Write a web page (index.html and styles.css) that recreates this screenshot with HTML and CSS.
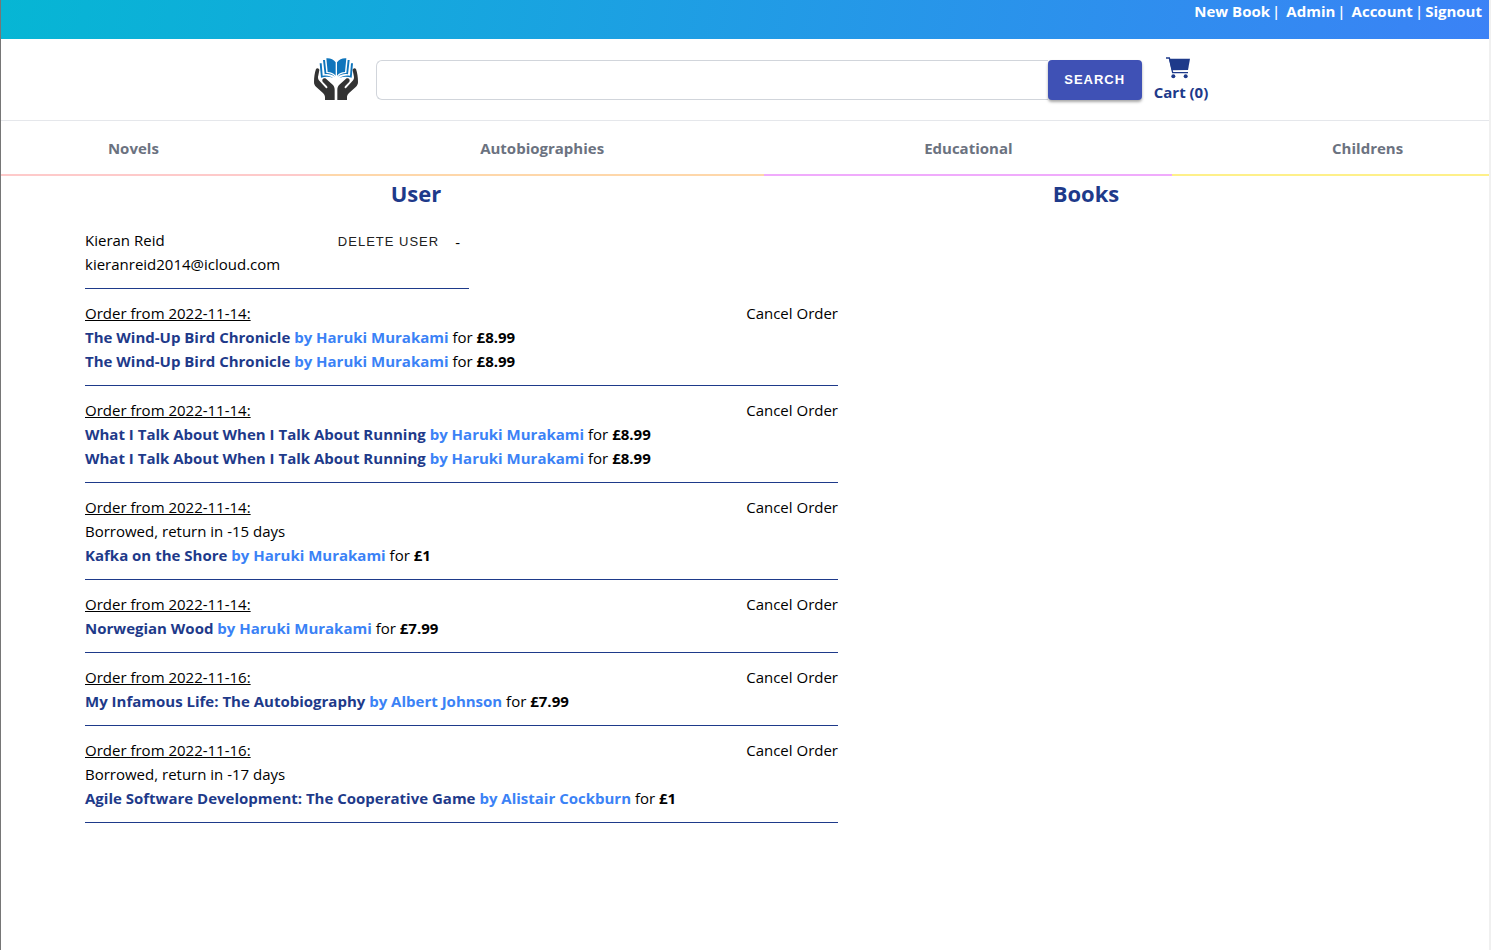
FILE: index.html
```html
<!DOCTYPE html>
<html lang="en">
<head>
<meta charset="utf-8">
<meta name="viewport" content="width=device-width, initial-scale=1">
<title>Admin</title>
<link rel="stylesheet" href="styles.css">
</head>
<body>
<div class="topbar">
  <a href="#">New Book</a><span class="bar bar-wide">|</span><a href="#">Admin</a><span class="bar bar-wide">|</span><a href="#">Account</a><span class="bar">|</span><a href="#">Signout</a>
</div>
<header class="header">
  <a class="logo" href="#" aria-label="Home">
    <svg width="44" height="43" viewBox="0 0 132 129">
      <g fill="#0f75bc">
        <path d="M65 13C58 4 49 0 37 1l4 41c10 0 18 4 24 11zM69 13C76 4 85 0 97 1l-4 41c-10 0-18 4-24 11z"/>
        <path d="M33 6h-6l5 43c11-2 21 0 31 8-6-9-15-12-26-12zM101 6h6l-5 43c-11-2-21 0-31 8 6-9 15-12 26-12z"/>
        <path d="M23 16h-6l4 43c13-4 25-4 37 1-9-7-20-9-32-7zM111 16h6l-4 43c-13-4-25-4-37 1 9-7 20-9 32-7z"/>
      </g>
      <g fill="#333">
        <path d="M6 33c4-5 11-1 10 4l-4 20c0 5 1 8 4 11l19 21c4 4 7 0 4-4L26 71c-4-7 4-13 10-9l20 18c4 4 6 9 6 15v31H33v-9c0-5-3-9-7-13L6 86c-4-4-6-8-6-14 0-14 2-27 6-39z"/>
        <path d="M126 33c-4-5-11-1-10 4l4 20c0 5-1 8-4 11L97 89c-4 4-7 0-4-4l13-14c4-7-4-13-10-9L76 80c-4 4-6 9-6 15v31h29v-9c0-5 3-9 7-13l20-18c4-4 6-8 6-14 0-14-2-27-6-39z"/>
      </g>
    </svg>
  </a>
  <form class="search">
    <input class="search-input" type="text" aria-label="Search books">
    <button class="search-button" type="button">SEARCH</button>
  </form>
  <a class="cart" href="#">
    <svg width="24" height="22" viewBox="0 0 72 66" fill="none" stroke="#1e3a8a">
      <path d="M0 3h10l10 44h46" stroke-width="4"/>
      <path d="M9 5h63l-6 34-49 1z" fill="#1e3a8a" stroke="none"/>
      <circle cx="22" cy="58" r="6" fill="#1e3a8a" stroke="none"/>
      <circle cx="59" cy="58" r="6" fill="#1e3a8a" stroke="none"/>
    </svg>
    <span>Cart (0)</span>
  </a>
</header>
<nav class="categories">
  <a class="novels" href="#">Novels</a>
  <a class="autobiographies" href="#">Autobiographies</a>
  <a class="educational" href="#">Educational</a>
  <a class="childrens" href="#">Childrens</a>
</nav>
<main class="admin">
  <div class="headings">
    <h2>User</h2>
    <h2>Books</h2>
  </div>
  <section class="user">
    <div class="profile">
      <div>Kieran Reid<br>kieranreid2014@icloud.com</div>
      <div class="actions"><button class="delete" type="button">DELETE USER</button><button class="toggle" type="button" aria-label="Collapse orders">-</button></div>
    </div>
    <article class="order">
      <div>
        <h3>Order from 2022-11-14:</h3>
        <p><b class="title">The Wind-Up Bird Chronicle</b> <b class="author">by Haruki Murakami</b> for <b>£8.99</b></p>
        <p><b class="title">The Wind-Up Bird Chronicle</b> <b class="author">by Haruki Murakami</b> for <b>£8.99</b></p>
      </div>
      <button class="cancel" type="button">Cancel Order</button>
    </article>
    <article class="order">
      <div>
        <h3>Order from 2022-11-14:</h3>
        <p><b class="title">What I Talk About When I Talk About Running</b> <b class="author">by Haruki Murakami</b> for <b>£8.99</b></p>
        <p><b class="title">What I Talk About When I Talk About Running</b> <b class="author">by Haruki Murakami</b> for <b>£8.99</b></p>
      </div>
      <button class="cancel" type="button">Cancel Order</button>
    </article>
    <article class="order">
      <div>
        <h3>Order from 2022-11-14:</h3>
        <p>Borrowed, return in -15 days</p>
        <p><b class="title">Kafka on the Shore</b> <b class="author">by Haruki Murakami</b> for <b>£1</b></p>
      </div>
      <button class="cancel" type="button">Cancel Order</button>
    </article>
    <article class="order">
      <div>
        <h3>Order from 2022-11-14:</h3>
        <p><b class="title">Norwegian Wood</b> <b class="author">by Haruki Murakami</b> for <b>£7.99</b></p>
      </div>
      <button class="cancel" type="button">Cancel Order</button>
    </article>
    <article class="order">
      <div>
        <h3>Order from 2022-11-16:</h3>
        <p><b class="title">My Infamous Life: The Autobiography</b> <b class="author">by Albert Johnson</b> for <b>£7.99</b></p>
      </div>
      <button class="cancel" type="button">Cancel Order</button>
    </article>
    <article class="order">
      <div>
        <h3>Order from 2022-11-16:</h3>
        <p>Borrowed, return in -17 days</p>
        <p><b class="title">Agile Software Development: The Cooperative Game</b> <b class="author">by Alistair Cockburn</b> for <b>£1</b></p>
      </div>
      <button class="cancel" type="button">Cancel Order</button>
    </article>
  </section>
</main>
</body>
</html>
```
FILE: styles.css
```css
* { box-sizing: border-box; }
body {
  margin: 0;
  min-height: 100vh;
  border-left: 1px solid #767676;
  border-right: 2px solid #f0f0f0;
  background: #fff;
  color: #000;
  font: 15px/24px "Open Sans", "Noto Sans", sans-serif;
}
h2, h3, p { margin: 0; }
a { color: inherit; text-decoration: none; }
button {
  border: 0;
  padding: 0;
  background: none;
  color: inherit;
  font: inherit;
  cursor: pointer;
}
b { font-weight: 700; }

.topbar {
  display: flex;
  justify-content: flex-end;
  height: 39px;
  padding-right: 7px;
  background: linear-gradient(100deg, #06b6d4, #3b82f6);
  color: #fff;
  font-weight: 700;
  line-height: 22px;
}
.bar { margin: 0 2px; font-weight: 600; }
.bar-wide { margin-right: 6px; }

.header {
  display: flex;
  justify-content: center;
  align-items: center;
  height: 82px;
  padding-left: 32px;
  border-bottom: 1px solid #e5e7eb;
}
.logo { display: flex; margin-right: 18px; }
.search { display: flex; width: 766px; height: 40px; }
.search-input {
  flex: 1;
  min-width: 0;
  padding: 0 16px;
  border: 1px solid #d1d5db;
  border-right: 0;
  border-radius: 6px 0 0 6px;
  font: inherit;
}
.search-button {
  width: 94px;
  border-radius: 4px;
  background: #3f51b5;
  box-shadow: 0 2px 3px rgba(0, 0, 0, 0.35);
  color: #fff;
  font: 700 13px/20px "Liberation Sans", Arial, sans-serif;
  letter-spacing: 1px;
}
.cart {
  display: flex;
  flex-direction: column;
  gap: 1px;
  margin-left: 12px;
  padding-top: 1px;
  color: #1e3a8a;
  font-weight: 700;
}
.cart svg { margin-left: 12px; }

.categories {
  display: grid;
  grid-template-columns: 319fr 445fr 408fr 317fr;
  color: #6b7280;
  font-weight: 700;
  text-align: center;
}
.categories a { padding: 15px 0 14px; border-bottom: 2px solid; }
.categories .novels { padding-right: 54px; border-color: #fecaca; }
.categories .autobiographies { border-color: #fed7aa; }
.categories .educational { border-color: #f0abfc; }
.categories .childrens { padding-left: 74px; border-color: #fef08a; }

.admin { padding: 1px 68px 24px 80px; }
.headings {
  display: grid;
  grid-template-columns: 1fr 1fr;
  color: #1e3a8a;
  text-align: center;
}
.headings h2 { font-size: 22px; line-height: 32px; font-weight: 700; }
.user { width: 757px; max-width: 100%; padding: 19px 0 0 4px; }
.profile {
  display: flex;
  justify-content: space-between;
  width: 384px;
  padding-bottom: 12px;
  border-bottom: 1px solid #1e3a8a;
}
.actions { display: flex; align-items: flex-start; padding: 2px 9px 0 0; }
.delete {
  color: #212121;
  font: 13px/24px "Liberation Sans", Arial, sans-serif;
  letter-spacing: 1px;
}
.toggle { margin-left: 16px; }
.order {
  display: flex;
  justify-content: space-between;
  align-items: flex-start;
  padding: 12px 0;
  border-bottom: 1px solid #1e3a8a;
}
.order h3 {
  font-size: 15px;
  line-height: 24px;
  font-weight: 500;
  text-decoration: underline;
}
.title { color: #1e3a8a; }
.author { color: #3b82f6; }
```
